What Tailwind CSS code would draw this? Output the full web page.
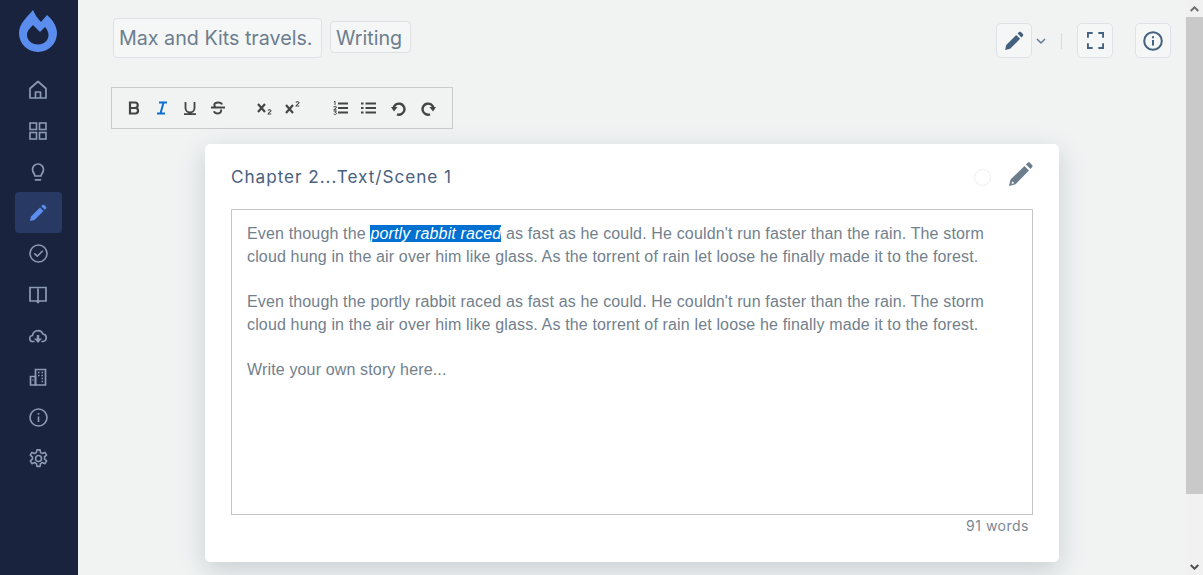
<!DOCTYPE html>
<html lang="en">
  <head>
    <meta charset="UTF-8" />
    <title>Writing</title>
    <script src="https://cdn.jsdelivr.net/npm/@tailwindcss/browser@4"></script>
  </head>
  <body class="h-[575px] overflow-hidden bg-[#f1f3f3] font-['Inter',sans-serif]">
    <div class="flex h-[575px]">
      <!-- Sidebar -->
      <nav class="flex h-full w-[78px] shrink-0 flex-col items-center bg-[#19233d] pr-[2px] text-[#8d9ab3]">
        <svg class="mt-[10px] h-[42px] w-[38px]" viewBox="0 0 38 42">
          <path fill="#5b8def" d="M14 0C16 5 19 9 22 12L28 5C33 9 38 16 38 23C38 33.500 29.500 42 19 42S0 33.500 0 23C0 14 8 7 14 0z" />
          <path fill="#19233d" d="M14 15L21 22L26 17C28 19 29.500 22 29.500 25C29.500 30.500 25 34.500 19 34.500S8 30.500 8 25C8 21 11 18 14 15z" />
        </svg>
        <div class="mt-[17px] flex w-full flex-col items-center">
          <a class="flex h-[41px] w-[47px] items-center justify-center">
            <svg class="h-[20px] w-[20px]" viewBox="0 0 20 20" fill="none" stroke="currentColor" stroke-width="1.700" stroke-linejoin="round">
              <path d="M2 18V8.500L10 1.500l8 7V18z" /><path d="M7.500 18v-6h5v6" />
            </svg>
          </a>
          <a class="flex h-[41px] w-[47px] items-center justify-center">
            <svg class="h-[18px] w-[18px]" viewBox="0 0 18 18" fill="none" stroke="currentColor" stroke-width="1.600">
              <rect x="1" y="1" width="6.500" height="6.500" /><rect x="10.500" y="1" width="6.500" height="6.500" /><rect x="1" y="10.500" width="6.500" height="6.500" /><rect x="10.500" y="10.500" width="6.500" height="6.500" />
            </svg>
          </a>
          <a class="flex h-[41px] w-[47px] items-center justify-center">
            <svg class="h-[20px] w-[20px]" viewBox="0 0 20 20" fill="none" stroke="currentColor" stroke-width="1.700" stroke-linecap="round">
              <path d="M7 14c0-2-2.500-3.500-2.500-6.500a5.500 5.500 0 0 1 11 0C15.500 10.500 13 12 13 14z" /><path d="M7.500 17.800h5" />
            </svg>
          </a>
          <a class="flex h-[41px] w-[47px] items-center justify-center rounded-[4px] bg-[#283a63]">
            <svg class="h-[18px] w-[18px]" viewBox="0 0 18 18" fill="#5b8def">
              <path d="M1 17l1-4.500L11 3.500l3.500 3.500-9 9z" /><path d="M12.200 2.300l1.300-1.300c.5-.5 1.200-.5 1.700 0l1.800 1.800c.5.5.5 1.200 0 1.700l-1.300 1.300z" />
            </svg>
          </a>
          <a class="flex h-[41px] w-[47px] items-center justify-center">
            <svg class="h-[19px] w-[19px]" viewBox="0 0 19 19" fill="none" stroke="currentColor" stroke-width="1.600" stroke-linecap="round" stroke-linejoin="round">
              <circle cx="9.500" cy="9.500" r="8.500" /><path d="M5.800 9.800l2.500 2.400 5-5" />
            </svg>
          </a>
          <a class="flex h-[41px] w-[47px] items-center justify-center">
            <svg class="h-[18px] w-[18px]" viewBox="0 0 18 18" fill="none" stroke="currentColor" stroke-width="1.700">
              <path d="M9 2.500V16M1 1.500h8h8v13.500h-6.500L9 16.500 7.500 15H1z" />
            </svg>
          </a>
          <a class="flex h-[41px] w-[47px] items-center justify-center">
            <svg class="h-[18px] w-[18px]" viewBox="0 0 18 18" fill="none" stroke="currentColor" stroke-width="1.600" stroke-linecap="round">
              <path d="M5 14.500H4a3 3 0 0 1-.5-6A5.500 5.500 0 0 1 14 7a3.800 3.800 0 0 1 .2 7.500H13" />
              <path fill="currentColor" stroke="none" d="M7.800 8h2.400v3.500h2.800L9 16l-4-4.500h2.800z" />
            </svg>
          </a>
          <a class="flex h-[41px] w-[47px] items-center justify-center">
            <svg class="h-[18px] w-[18px]" viewBox="0 0 18 18" fill="none" stroke="currentColor" stroke-width="1.700">
              <path d="M6.500 17V1.500h10V17z" /><path d="M1.500 17V8.500h5V17z" />
              <path stroke-width="1.500" d="M9 4.500h1.500M12.500 4.500H14M9 7.500h1.500M12.500 7.500H14M12.500 10.500H14M12.500 13.500H14M3.500 12h1" />
            </svg>
          </a>
          <a class="flex h-[41px] w-[47px] items-center justify-center">
            <svg class="h-[19px] w-[19px]" viewBox="0 0 19 19" fill="none" stroke="currentColor" stroke-width="1.600">
              <circle cx="9.500" cy="9.500" r="8.500" /><path d="M9.500 8.500V14" /><path d="M9.500 5v1.700" />
            </svg>
          </a>
          <a class="flex h-[41px] w-[47px] items-center justify-center">
            <svg class="h-[19px] w-[19px]" viewBox="1.500 1.500 21 21" fill="none" stroke="currentColor" stroke-width="1.800" stroke-linejoin="round">
              <path d="M10.300 2.500h3.400l.6 3 2 1 2.800-1.200 1.800 3-2.300 2 .1 2.400 2.300 2-1.800 3-2.900-1.200-2 1.200-.6 3h-3.400l-.6-3-2-1.200-2.900 1.200-1.800-3 2.300-2-.1-2.400-2.300-2 1.800-3 2.900 1.200 2-1z" />
              <circle cx="12" cy="12" r="3.300" />
            </svg>
          </a>
        </div>
      </nav>

      <!-- Main -->
      <main class="min-w-0 flex-1">
        <div class="flex h-[87px] items-start pt-[18px] pr-[15px] pl-[35px]">
          <div class="flex items-center gap-[8px]">
            <div class="flex h-[40px] w-[209px] items-center rounded-[4px] border border-[#dee2e6] bg-[#f5f7f7] px-[5px] pt-[2px] text-[19.700px] whitespace-nowrap text-[#6c7d8e]">Max and Kits travels.</div>
            <div class="mb-[2px] flex h-[32px] w-[81px] items-center rounded-[4px] border border-[#dee2e6] bg-[#f5f7f7] px-[5px] pt-[3px] text-[19.700px] text-[#6c7d8e]">Writing</div>
          </div>
          <div class="ml-auto flex items-center pt-[5px]">
            <button class="flex h-[35px] w-[36px] items-center justify-center rounded-[5px] border border-[#dee2e6] bg-[#f5f7f7]">
              <svg class="h-[20px] w-[20px]" viewBox="0 0 18 18" fill="#44617f">
                <path d="M1 17l1-4.500L11 3.500l3.500 3.500-9 9z" /><path d="M12.200 2.300l1.300-1.300c.5-.5 1.200-.5 1.700 0l1.800 1.800c.5.5.5 1.200 0 1.700l-1.300 1.300z" />
              </svg>
            </button>
            <svg class="ml-[4px] h-[8px] w-[10px]" viewBox="0 0 10 8" fill="none" stroke="#5f7a96" stroke-width="1.500"><path d="M1 2l4 4 4-4" /></svg>
            <span class="mr-[15px] ml-[15px] h-[16px] w-px bg-[#d5dadd]"></span>
            <button class="flex h-[35px] w-[36px] items-center justify-center rounded-[5px] border border-[#dee2e6] bg-[#f5f7f7]">
              <svg class="h-[17px] w-[17px]" viewBox="0 0 18 18" fill="none" stroke="#44617f" stroke-width="2">
                <path d="M1 6V1h5M12 1h5v5M17 12v5h-5M6 17H1v-5" />
              </svg>
            </button>
            <button class="ml-[22px] flex h-[35px] w-[36px] items-center justify-center rounded-[5px] border border-[#dee2e6] bg-[#f5f7f7]">
              <svg class="h-[20px] w-[20px]" viewBox="0 0 20 20" fill="none" stroke="#44617f" stroke-width="2">
                <circle cx="10" cy="10" r="8.800" /><path d="M10 9v5.500M10 5.200v2" />
              </svg>
            </button>
          </div>
        </div>

        <!-- Toolbar -->
        <div class="ml-[33px] flex h-[42px] w-[342px] items-center border border-[#c8cccc] pl-[15px] text-[#444]">
          <svg class="h-[14px] w-[14px]" viewBox="0 0 14 14" fill="none" stroke="#444" stroke-width="2.200"><path d="M3 1.500h5a2.700 2.700 0 0 1 0 5.500H3zM3 7h5.800a2.800 2.800 0 0 1 0 5.500H3zM3 1v12" /></svg>
          <svg class="ml-[14px] h-[14px] w-[14px]" viewBox="0 0 14 14" fill="none" stroke="#0b6fd4" stroke-width="2"><path d="M4 1.500h8M2 12.500h8M8.500 1.500l-3 11" /></svg>
          <svg class="ml-[14px] h-[14px] w-[14px]" viewBox="0 0 14 14" fill="none" stroke="#444" stroke-width="1.800"><path d="M2.500 1v6a4.500 4.500 0 0 0 9 0V1M1 13.200h12" /></svg>
          <svg class="ml-[14px] h-[14px] w-[14px]" viewBox="0 0 14 14" fill="none" stroke="#444" stroke-width="2"><path d="M11 3.500C10.500 2 9 1.500 7 1.500 5 1.500 3.300 2.500 3.300 4c0 1 .5 2 1.700 3M0 6.500h14M10 8.500c.7 2.500-1 4-3 4-2 0-3.500-.7-4-2.200" /></svg>
          <svg class="ml-[32px] h-[14px] w-[16px]" viewBox="0 0 16 14" fill="none" stroke="#444"><path stroke-width="2.200" d="M1 3l7 8M8 3l-7 8" /><path stroke-width="1.100" d="M11 9.500c.3-1 3-1 3 .3 0 1-2.800 1.700-3 3.200h3.300" /></svg>
          <svg class="ml-[12px] h-[14px] w-[16px]" viewBox="0 0 16 14" fill="none" stroke="#444"><path stroke-width="2.200" d="M1 4l7 8M8 4l-7 8" /><path stroke-width="1.100" d="M11 1.500c.3-1 3-1 3 .3 0 1-2.800 1.700-3 3.200h3.300" /></svg>
          <svg class="ml-[32px] h-[14px] w-[15px]" viewBox="0 0 15 14" fill="none" stroke="#444"><path stroke-width="2" d="M5 2.500h10M5 7h10M5 11.500h10" /><path stroke-width="1" d="M1 .5l1-.3V4M.5 5.700h2.800v1.100L.7 8.800h2.800M.6 10h2.800l-1.400 1.400c1.400 0 1.700.8 1.400 1.500-.3.700-2 .8-2.700.2" /></svg>
          <svg class="ml-[13px] h-[14px] w-[15px]" viewBox="0 0 15 14" fill="none" stroke="#444" stroke-width="2"><path d="M4.500 2.500h10.500M4.500 7h10.500M4.500 11.500h10.500M0 2.500h2.500M0 7h2.500M0 11.500h2.500" /></svg>
          <svg class="ml-[15px] h-[15px] w-[15px]" viewBox="0 0 15 15" fill="none" stroke="#444" stroke-width="2.400"><path d="M6 13.300a5.500 5.500 0 1 0-3.500-6" /><path fill="#444" stroke="none" d="M0 6h6.500L3 10.500z" /></svg>
          <svg class="ml-[15px] h-[15px] w-[15px]" viewBox="0 0 15 15" fill="none" stroke="#444" stroke-width="2.400"><path d="M9 13.300a5.500 5.500 0 1 1 3.500-6" /><path fill="#444" stroke="none" d="M15 6H8.500l3.500 4.500z" /></svg>
        </div>

        <!-- Card -->
        <section class="mt-[15px] ml-[127px] h-[418px] w-[854px] rounded-[5px] bg-white px-[26px] shadow-[0_8px_26px_rgba(70,90,110,0.24)]">
          <div class="flex h-[65px] items-center">
            <h2 class="text-[17.200px] tracking-[0.95px] text-[#4a6180]">Chapter 2...Text/Scene 1</h2>
            <span class="mt-[2px] ml-auto h-[17px] w-[17px] rounded-full border border-[#ecefef]"></span>
            <svg class="mr-[-1px] mb-[6px] ml-[17px] h-[26px] w-[26px]" viewBox="0 0 26 26" fill="#6c7d8e">
              <path d="M1 25l1.500-6.500L16.500 5 21 9.500 7.500 23.200zM3.500 23l2.800-.8-2-2z" fill-rule="evenodd" />
              <path d="M18 3.500l1.700-1.700c.6-.6 1.500-.6 2.100 0l2.300 2.300c.6.600.6 1.500 0 2.100l-1.700 1.700z" />
            </svg>
          </div>
          <div class="h-[306px] border border-[#c4c4c4] pt-[13px] pr-[15px] pl-[15px] font-['Liberation_Sans',sans-serif] text-[16px] leading-[22.670px] tracking-[0.15px] text-[#727f8d]">
            <p>Even though the <em class="bg-[#0070d1] text-white">portly rabbit raced</em> as fast as he could. He couldn't run faster than the rain. The storm cloud hung in the air over him like glass. As the torrent of rain let loose he finally made it to the forest.</p>
            <p class="mt-[22.670px]">Even though the portly rabbit raced as fast as he could. He couldn't run faster than the rain. The storm cloud hung in the air over him like glass. As the torrent of rain let loose he finally made it to the forest.</p>
            <p class="mt-[22.670px]">Write your own story here...</p>
          </div>
          <div class="pr-[4px] text-right text-[14px] tracking-[0.5px] text-[#7a8794]">91 words</div>
        </section>
      </main>

      <!-- Scrollbar -->
      <div class="flex h-full w-[17px] shrink-0 flex-col bg-[#f1f1f1]">
        <div class="flex h-[17px] items-center justify-center">
          <svg class="h-[6px] w-[9px]" viewBox="0 0 9 6" fill="none" stroke="#6e6e6e" stroke-width="2"><path d="M.7 5l3.800-3.700L8.300 5" /></svg>
        </div>
        <div class="h-[477px] bg-[#c9c9c9]"></div>
        <div class="mt-auto flex h-[17px] items-center justify-center">
          <svg class="h-[6px] w-[9px]" viewBox="0 0 9 6" fill="none" stroke="#505050" stroke-width="2"><path d="M.7 1l3.800 3.700L8.300 1" /></svg>
        </div>
      </div>
    </div>
  </body>
</html>
